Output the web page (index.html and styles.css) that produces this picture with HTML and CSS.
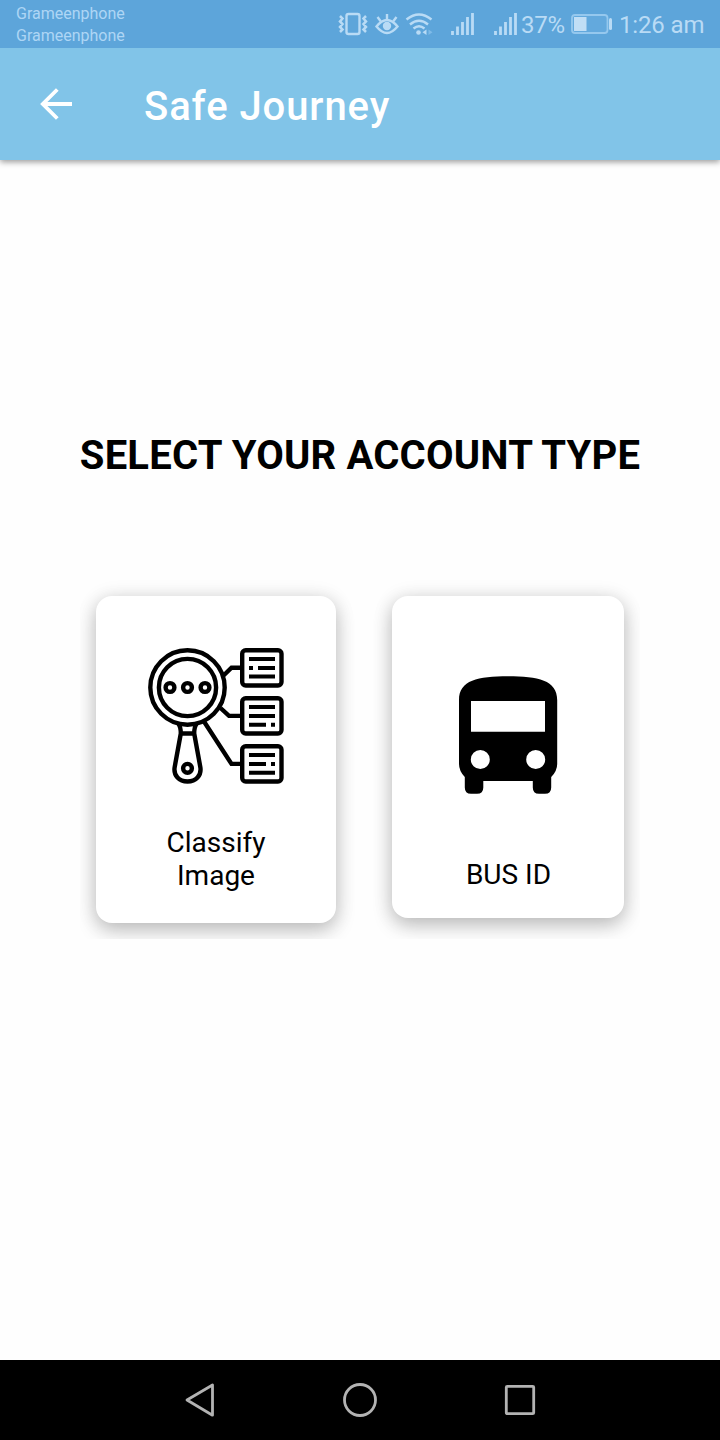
FILE: index.html
```html
<!DOCTYPE html>
<html lang="en">
<head>
<meta charset="utf-8">
<title>Safe Journey</title>
<link rel="stylesheet" href="styles.css">
</head>
<body>
<div class="screen">
  <div class="status">
    <div class="carriers"><span>Grameenphone</span><span>Grameenphone</span></div>
    <svg class="status-icons" width="182" height="48" viewBox="338 0 182 48" fill="none" stroke="#b9dbf5">
      <rect x="346.500" y="14" width="13" height="20" rx="2" stroke-width="2.400"/>
      <path d="M340 16l2.500 2.500-2.500 3 2.500 2.500-2.500 3 2.500 2.500-2.500 2.500M366 16l-2.500 2.500 2.500 3-2.500 2.500 2.500 3-2.500 2.500 2.500 2.500" stroke-width="2.500"/>
      <path d="M376.500 26.500Q387 13.500 397.500 26.500Q387 39.500 376.500 26.500ZM387 19v-5M380.500 21l-3-4M393.500 21l3-4" stroke-width="2.400"/>
      <circle cx="387" cy="26" r="4.200" fill="#b9dbf5" stroke="none"/>
      <path d="M406.500 19.500Q419 9.500 431.500 19.500M410 24.500Q419 17 428 24.500M413.500 28.500Q419 24 424.500 28.500" stroke-width="2.400"/>
      <circle cx="418.500" cy="32.500" r="2.300" fill="#b9dbf5" stroke="none"/>
      <path d="M426.500 29.500v5.500l-4-2.700z" fill="#b9dbf5" stroke="none"/>
      <path d="M428.500 29.500v5.500l4-2.700z" fill="#7fbbe8" stroke="none"/>
      <path d="M452.500 35v-4M457.500 35v-8.500M462.500 35v-13M467.500 35v-18M472.500 35v-22M495.500 35v-4M500.500 35v-8.500M505.500 35v-13M510.500 35v-18M515.500 35v-22" stroke-width="2.800"/>
    </svg>
    <span class="battery-text">37%</span>
    <svg class="battery" width="42" height="20" viewBox="571 14 42 20">
      <rect x="572" y="15" width="35.500" height="18" rx="3" fill="#63a9dd" stroke="#95c8ee" stroke-width="1.800"/>
      <rect x="574" y="17" width="12.500" height="14" fill="#c1def5"/>
      <rect x="609" y="18" width="3" height="12" rx="1.500" fill="#b9dbf5"/>
    </svg>
    <span class="clock">1:26 am</span>
  </div>
  <header class="appbar">
    <svg width="32" height="32" viewBox="0 0 32 32" fill="none" stroke="#fff" stroke-width="3.800"><path d="M17.300 1.500L2.800 16l14.500 14.500M2.500 16H32"/></svg>
    <h1>Safe Journey</h1>
  </header>
  <main>
    <h2>SELECT YOUR ACCOUNT TYPE</h2>
    <div class="cards">
      <div class="card classify">
        <svg class="lens" width="150" height="150" viewBox="0 0 150 150" fill="none" stroke="#000" stroke-width="4.400">
          <circle cx="47.500" cy="47.500" r="37.200"/><circle cx="47.500" cy="47.500" r="28.600"/>
          <circle cx="30" cy="47.500" r="4.400"/><circle cx="47.500" cy="47.500" r="4.400"/><circle cx="65" cy="47.500" r="4.400"/>
          <path d="M38.500 84q2.300 3 2.300 9.500L34.600 127.500C33.500 135.500 39 141.500 47.500 141.500S61.500 135.500 60.400 127.500L54.200 93.500q0-6.500 2.300-9.500M40.800 93.500h13.400"/>
          <circle cx="47.500" cy="128.300" r="4.400"/>
          <path d="M83 36l8.500-8.300H102M80.500 68l8.500 7.900h13M64 81.500l27.500 42.400H102"/>
          <rect x="102.200" y="10.200" width="39.300" height="35.300" rx="3.500"/>
          <rect x="102.200" y="58.200" width="39.300" height="35.300" rx="3.500"/>
          <rect x="102.200" y="106.200" width="39.300" height="35.300" rx="3.500"/>
          <path d="M109 19h26M109 27.900h4M118 27.900h17M109 36.500h26M109 67.100h26M109 75.900h26M109 84.700h17M131 84.700h4M109 115.100h26M109 123.900h17M131 123.900h4M109 132.700h26" stroke-width="4"/>
        </svg>
        <p>Classify<br>Image</p>
      </div>
      <div class="card bus">
        <svg width="100" height="120" viewBox="458 675 100 120">
          <path fill-rule="evenodd" d="M459 700C459 680 478 676.200 508 676.200S557.200 680 557.200 700V764Q557.200 771 551.200 777V787.500Q551.200 793.800 545 793.800H539Q532.800 793.800 532.800 787.500V781H483.300V787.500Q483.300 793.800 477 793.800H471Q464.800 793.800 464.800 787.500V777Q459 771 459 764ZM471 701V731.700H545V701ZM489.800 759.500a9.500 9.500 0 1 0-19 0a9.500 9.500 0 1 0 19 0ZM545.200 759.500a9.500 9.500 0 1 0-19 0a9.500 9.500 0 1 0 19 0Z"/>
        </svg>
        <p>BUS ID</p>
      </div>
    </div>
  </main>
  <nav>
    <svg width="32" height="36" viewBox="0 0 32 36"><path d="M28.500 3v30.200L3 18z"/></svg>
    <svg width="36" height="36" viewBox="0 0 36 36"><circle cx="18" cy="18" r="15.500"/></svg>
    <svg width="32" height="36" viewBox="0 0 32 36"><rect x="2.300" y="4.300" width="27.400" height="27.400" rx="1"/></svg>
  </nav>
</div>
</body>
</html>
```
FILE: styles.css
```css
* { box-sizing: border-box; }
body, h1, h2, p { margin: 0; }
body { font-family: Roboto, sans-serif; background: #fefefe; color: #000; }
svg { display: block; flex: none; }
.screen { width: 720px; height: 1440px; display: flex; flex-direction: column; overflow: hidden; }
.status { position: relative; z-index: 1; height: 48px; flex: none; display: flex; align-items: center; padding: 0 0 0 16px; background: #5da5da; color: #b9dbf5; white-space: nowrap; }
.carriers { display: flex; flex: none; flex-direction: column; width: 322px; font-size: 16px; line-height: 22px; padding-top: 1px; color: #aed6f5; }
.battery-text { flex: none; width: 51px; padding: 1px 0 0 1px; font-size: 24px; letter-spacing: -.2px; }
.battery { margin-right: 6px; }
.clock { font-size: 24px; padding-top: 1px; letter-spacing: -.15px; }
.appbar { height: 112px; flex: none; display: flex; align-items: center; padding-left: 40px; background: #81c4e8; box-shadow: 0 2px 6px rgba(0,0,0,.4); color: #fff; }
.appbar h1 { margin-left: 72px; padding-top: 6px; font-size: 40px; font-weight: 500; letter-spacing: .92px; line-height: 48px; white-space: nowrap; }
main { flex: 1; padding: 271px 76px 0; }
h2 { font-size: 40px; font-weight: 700; line-height: 50px; letter-spacing: .2px; text-align: center; white-space: nowrap; }
.cards { display: flex; align-items: flex-start; gap: 56px; margin: 89px 4px 0; height: 369px; padding: 26px 16px 0; overflow: hidden; }
.card { background: #fff; border-radius: 16px; box-shadow: 0 8px 20px rgba(0,0,0,.2), 0 2px 20px rgba(0,0,0,.12); text-align: center; font-size: 28px; line-height: 33px; display: flex; flex-direction: column; align-items: center; }
.classify { width: 240px; height: 327px; padding-top: 44px; }
.lens { margin: 0 2px 36px 0; }
.bus { width: 232px; height: 322px; padding-top: 79px; }
.bus p { margin-top: 63px; padding-left: 1px; }
nav { height: 80px; flex: none; background: #000; display: flex; justify-content: center; align-items: center; gap: 126px; }
nav svg { fill: none; stroke: #b3b3b3; stroke-width: 2.8; stroke-linejoin: round; }
```
